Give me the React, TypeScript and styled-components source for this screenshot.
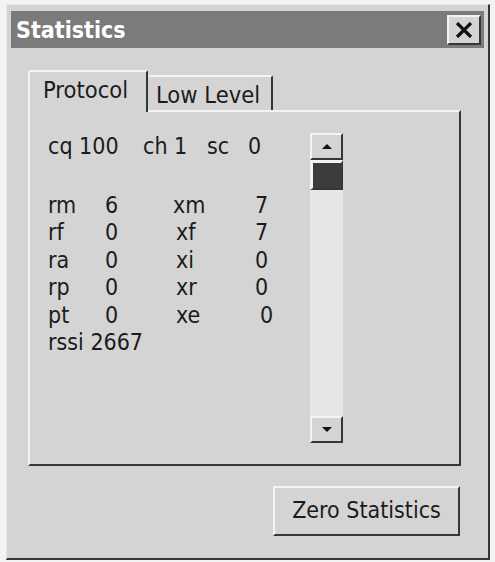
import styled, { createGlobalStyle } from "styled-components";

const GlobalStyle = createGlobalStyle`
  html, body {
    margin: 0;
    padding: 0;
    background: #f3f3f3;
  }
  body {
    font-family: "DejaVu Sans Condensed", "DejaVu Sans", sans-serif;
    color: #1b1b1b;
  }
`;

const light = "#f4f4f4";
const dark = "#363636";
const face = "#d4d4d4";

const Window = styled.div`
  box-sizing: border-box;
  width: 484px;
  height: 556px;
  margin: 4px 0 0 6px;
  padding: 6px 4px 0 4px;
  background: ${face};
  border-top: 1px solid #e6e6e6;
  border-left: 1px solid #e6e6e6;
  border-right: 2px solid ${dark};
  border-bottom: 2px solid ${dark};
  display: flex;
  flex-direction: column;
`;

const TitleBar = styled.div`
  height: 37px;
  background: #7b7b7b;
  display: flex;
  align-items: center;
  justify-content: space-between;
  padding: 0 3px 0 5px;
`;

const Title = styled.span`
  color: #fff;
  font-weight: bold;
  font-size: 23px;
`;

const CloseButton = styled.button`
  box-sizing: border-box;
  width: 34px;
  height: 30px;
  padding: 0;
  background: ${face};
  border-top: 2px solid ${light};
  border-left: 2px solid ${light};
  border-right: 2px solid ${dark};
  border-bottom: 2px solid ${dark};
  display: flex;
  align-items: center;
  justify-content: center;
`;

const Body = styled.div`
  padding: 22px 0 0 17px;
  display: flex;
  flex-direction: column;
`;

const TabStrip = styled.div`
  display: flex;
  align-items: flex-end;
  height: 40px;
  position: relative;
  z-index: 1;
`;

const Tab = styled.div<{ $active?: boolean }>`
  box-sizing: border-box;
  background: ${face};
  font-size: 23.5px;
  display: flex;
  align-items: center;
  border-top: 2px solid ${light};
  border-right: 2px solid ${dark};
  border-top-left-radius: 3px;
  border-top-right-radius: 2px;
  ${(p) =>
    p.$active
      ? `
    width: 120px;
    height: 42px;
    margin-bottom: -2px;
    padding: 0 0 5px 13px;
    border-left: 2px solid ${light};
  `
      : `
    width: 125px;
    height: 35px;
    padding: 3px 0 0 8px;
  `}
`;

const Panel = styled.div`
  box-sizing: border-box;
  width: 433px;
  height: 356px;
  border-top: 2px solid ${light};
  border-left: 2px solid ${light};
  border-right: 2px solid ${dark};
  border-bottom: 2px solid ${dark};
  padding: 21px 0 0 18px;
  display: flex;
`;

const Stats = styled.div`
  width: 262px;
  font-size: 23px;
  line-height: 27.5px;
`;

const HeaderRow = styled.div`
  display: grid;
  grid-template-columns: 95px 64px 41px auto;
  white-space: nowrap;
`;

const StatGrid = styled.div`
  margin-top: 31px;
  display: grid;
  grid-template-columns: 57px 68px 82px auto;
  white-space: nowrap;
`;

const Cell = styled.span<{ $shift?: number }>`
  padding-left: ${(p) => p.$shift ?? 0}px;
`;

const Wide = styled.span`
  grid-column: 1 / -1;
`;

const ScrollBar = styled.div`
  width: 33px;
  height: 310px;
  display: flex;
  flex-direction: column;
`;

const ScrollButton = styled.div`
  box-sizing: border-box;
  height: 27px;
  background: ${face};
  border-top: 2px solid ${light};
  border-left: 2px solid ${light};
  border-right: 2px solid ${dark};
  border-bottom: 2px solid ${dark};
  display: flex;
  align-items: center;
  justify-content: center;
`;

const Arrow = styled.span<{ $down?: boolean }>`
  width: 0;
  height: 0;
  border-left: 5px solid transparent;
  border-right: 5px solid transparent;
  ${(p) =>
    p.$down ? "border-top: 5px solid #111;" : "border-bottom: 5px solid #111;"}
`;

const Thumb = styled.div`
  box-sizing: border-box;
  height: 30px;
  background: #3c3c3c;
  border-top: 3px solid ${light};
  border-left: 3px solid ${light};
  border-right: 2px solid ${dark};
  border-bottom: 2px solid ${dark};
`;

const Track = styled.div`
  flex: 1;
  background: #e7e7e7;
`;

const Footer = styled.div`
  width: 432px;
  margin-top: 20px;
  display: flex;
  justify-content: flex-end;
`;

const PushButton = styled.button`
  box-sizing: border-box;
  width: 187px;
  height: 50px;
  background: ${face};
  font-family: inherit;
  font-size: 23px;
  color: #1b1b1b;
  border-top: 2px solid ${light};
  border-left: 2px solid ${light};
  border-right: 2px solid ${dark};
  border-bottom: 2px solid ${dark};
  padding: 0 0 2px 0;
`;

const rows: [string, string, string, string, number?][] = [
  ["rm", "6", "xm", "7"],
  ["rf", "0", "xf", "7"],
  ["ra", "0", "xi", "0"],
  ["rp", "0", "xr", "0"],
  ["pt", "0", "xe", "0", 5],
];

export default function App() {
  return (
    <>
      <GlobalStyle />
      <Window>
        <TitleBar>
          <Title>Statistics</Title>
          <CloseButton aria-label="close">
            <svg width="18" height="16" viewBox="0 0 18 16">
              <path d="M2 1 L16 15 M16 1 L2 15" stroke="#111" strokeWidth="3.2" />
            </svg>
          </CloseButton>
        </TitleBar>
        <Body>
          <TabStrip>
            <Tab $active>Protocol</Tab>
            <Tab>Low Level</Tab>
          </TabStrip>
          <Panel>
            <Stats>
              <HeaderRow>
                <span>cq 100</span>
                <span>ch 1</span>
                <span>sc</span>
                <span>0</span>
              </HeaderRow>
              <StatGrid>
                {rows.map(([a, av, b, bv, shift]) => (
                  <>
                    <Cell key={a}>{a}</Cell>
                    <Cell>{av}</Cell>
                    <Cell $shift={b === "xm" ? 0 : 3}>{b}</Cell>
                    <Cell $shift={shift}>{bv}</Cell>
                  </>
                ))}
                <Wide>rssi 2667</Wide>
              </StatGrid>
            </Stats>
            <ScrollBar>
              <ScrollButton>
                <Arrow />
              </ScrollButton>
              <Thumb />
              <Track />
              <ScrollButton>
                <Arrow $down />
              </ScrollButton>
            </ScrollBar>
          </Panel>
          <Footer>
            <PushButton>Zero Statistics</PushButton>
          </Footer>
        </Body>
      </Window>
    </>
  );
}
